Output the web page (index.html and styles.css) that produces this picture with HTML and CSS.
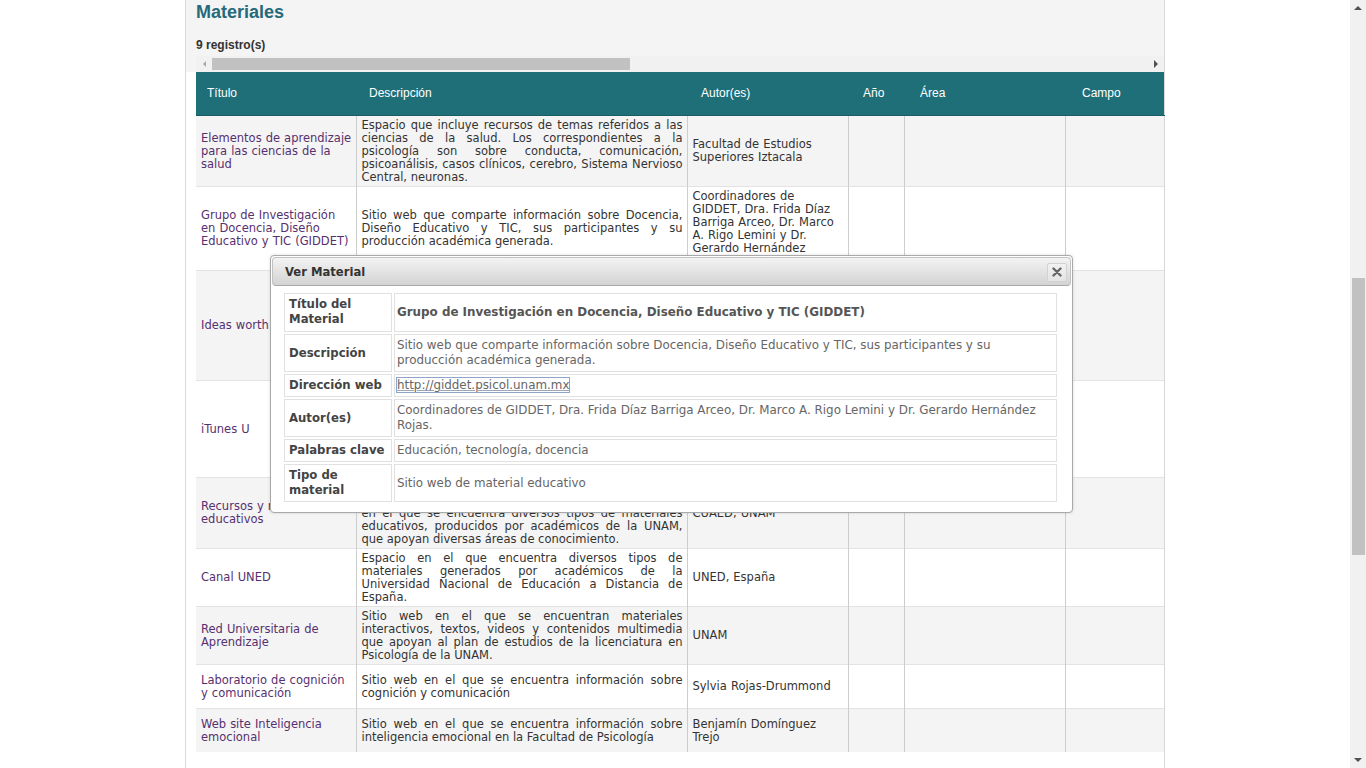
FILE: index.html
```html
<!DOCTYPE html>
<html lang="es">
<head>
<meta charset="utf-8">
<title>Materiales</title>
<link rel="stylesheet" href="styles.css">
</head>
<body>
<div class="viewport">
  <div class="page">
    <div class="page-head">
      <h2 class="page-title">Materiales</h2>
      <div class="count">9 registro(s)</div>
      <div class="hscroll">
        <span class="hs-btn"><i class="tri tri-left"></i></span>
        <span class="hs-thumb"></span>
        <span class="hs-fill"></span>
        <span class="hs-btn"><i class="tri tri-right"></i></span>
      </div>
    </div>
    <div class="table-wrap">
      <table class="grid">
        <colgroup>
          <col class="c-title"><col class="c-desc"><col class="c-auth"><col class="c-year"><col class="c-area"><col class="c-field">
        </colgroup>
        <thead>
          <tr class="head-row">
            <th>Título</th><th>Descripción</th><th>Autor(es)</th><th>Año</th><th>Área</th><th>Campo</th>
          </tr>
        </thead>
        <tbody>
          <tr>
            <td><a href="#">Elementos de aprendizaje para las ciencias de la salud</a></td>
            <td class="desc">Espacio que incluye recursos de temas referidos a las ciencias de la salud. Los correspondientes a la psicología son sobre conducta, comunicación, psicoanálisis, casos clínicos, cerebro, Sistema Nervioso Central, neuronas.</td>
            <td class="auth">Facultad de Estudios Superiores Iztacala</td><td></td><td></td><td></td>
          </tr>
          <tr>
            <td><a href="#">Grupo de Investigación en Docencia, Diseño Educativo y TIC (GIDDET)</a></td>
            <td class="desc">Sitio web que comparte información sobre Docencia, Diseño Educativo y TIC, sus participantes y su producción académica generada.</td>
            <td class="auth">Coordinadores de GIDDET, Dra. Frida Díaz Barriga Arceo, Dr. Marco A. Rigo Lemini y Dr. Gerardo Hernández Rojas.</td><td></td><td></td><td></td>
          </tr>
          <tr class="row-ted">
            <td><a href="#">Ideas worth spreading</a></td>
            <td class="desc">Sitio web con conferencias de expertos de todo el mundo sobre ciencia, tecnología, educación, diseño y psicología, con subtítulos en español.</td>
            <td class="auth">TED</td><td></td><td></td><td></td>
          </tr>
          <tr class="row-itunes">
            <td><a href="#">iTunes U</a></td>
            <td class="desc">Espacio en el que universidades de todo el mundo comparten cursos, conferencias y materiales educativos.</td>
            <td class="auth">Apple</td><td></td><td></td><td></td>
          </tr>
          <tr>
            <td><a href="#">Recursos y materiales educativos</a></td>
            <td class="desc">Portal de la Coordinación de Universidad Abierta y Educación a Distancia. Espacio<br>en el que se encuentra diversos tipos de materiales educativos, producidos por académicos de la UNAM, que apoyan diversas áreas de conocimiento.</td>
            <td class="auth">CUAED, UNAM</td><td></td><td></td><td></td>
          </tr>
          <tr>
            <td><a href="#">Canal UNED</a></td>
            <td class="desc">Espacio en el que encuentra diversos tipos de materiales generados por académicos de la Universidad Nacional de Educación a Distancia de España.</td>
            <td class="auth">UNED, España</td><td></td><td></td><td></td>
          </tr>
          <tr>
            <td><a href="#">Red Universitaria de Aprendizaje</a></td>
            <td class="desc">Sitio web en el que se encuentran materiales interactivos, textos, videos y contenidos multimedia que apoyan al plan de estudios de la licenciatura en Psicología de la UNAM.</td>
            <td class="auth">UNAM</td><td></td><td></td><td></td>
          </tr>
          <tr>
            <td><a href="#">Laboratorio de cognición y comunicación</a></td>
            <td class="desc">Sitio web en el que se encuentra información sobre cognición y comunicación</td>
            <td class="auth">Sylvia Rojas-Drummond</td><td></td><td></td><td></td>
          </tr>
          <tr>
            <td><a href="#">Web site Inteligencia emocional</a></td>
            <td class="desc">Sitio web en el que se encuentra información sobre inteligencia emocional en la Facultad de Psicología</td>
            <td class="auth">Benjamín Domínguez Trejo</td><td></td><td></td><td></td>
          </tr>
        </tbody>
      </table>
    </div>
  </div>

  <div class="dialog">
    <div class="dialog-bar">
      <span class="dialog-title">Ver Material</span>
      <span class="dialog-close">
        <svg width="10" height="10" viewBox="0 0 10 10"><path d="M1.5 1.5L8.5 8.5M8.5 1.5L1.5 8.5" stroke="#666" stroke-width="2.4" stroke-linecap="round"/></svg>
      </span>
    </div>
    <div class="dialog-body">
      <table class="detail">
        <tr class="first">
          <th>Título del Material</th>
          <td class="strong">Grupo de Investigación en Docencia, Diseño Educativo y TIC (GIDDET)</td>
        </tr>
        <tr>
          <th>Descripción</th>
          <td>Sitio web que comparte información sobre Docencia, Diseño Educativo y TIC, sus participantes y su producción académica generada.</td>
        </tr>
        <tr>
          <th>Dirección web</th>
          <td><a class="url" href="#">http://giddet.psicol.unam.mx</a></td>
        </tr>
        <tr>
          <th>Autor(es)</th>
          <td>Coordinadores de GIDDET, Dra. Frida Díaz Barriga Arceo, Dr. Marco A. Rigo Lemini y Dr. Gerardo Hernández Rojas.</td>
        </tr>
        <tr>
          <th>Palabras clave</th>
          <td>Educación, tecnología, docencia</td>
        </tr>
        <tr>
          <th>Tipo de material</th>
          <td>Sitio web de material educativo</td>
        </tr>
      </table>
    </div>
  </div>
</div>
<div class="vscroll">
  <span class="vs-btn"><i class="tri tri-up"></i></span>
  <span class="vs-thumb"></span>
  <span class="vs-fill"></span>
  <span class="vs-btn"><i class="tri tri-down"></i></span>
</div>
</body>
</html>
```

FILE: styles.css
```css
html, body {
  margin: 0;
  height: 100%;
  overflow: hidden;
  background: #fff;
}
body {
  display: flex;
  font-family: "DejaVu Sans", Verdana, sans-serif;
}
.viewport {
  flex: 1;
  position: relative;
  overflow: hidden;
}
.page {
  width: 980px;
  margin: 0 auto;
  min-height: 100%;
  box-sizing: border-box;
  border-left: 1px solid #dadada;
  border-right: 1px solid #dadada;
  background: #fff;
}
.page-head {
  background: #f4f4f4;
  padding-left: 10px;
}
.page-title {
  margin: 0;
  font: bold 18px/24px "Liberation Sans", Arial, sans-serif;
  color: #25697a;
}
.count {
  margin-top: 13px;
  font: bold 12px/16px "Liberation Sans", Arial, sans-serif;
  color: #333;
}
.hscroll {
  margin-top: 3px;
  height: 16px;
  background: #f1f1f1;
  display: flex;
  align-items: center;
}
.hs-btn, .vs-btn {
  width: 16px;
  height: 16px;
  display: flex;
  align-items: center;
  justify-content: center;
  flex: none;
}
.hs-thumb {
  width: 418px;
  height: 12px;
  background: #c1c1c1;
}
.hs-fill, .vs-fill { flex: 1; }
.tri {
  width: 0;
  height: 0;
  display: block;
}
.tri-left {
  border-top: 3px solid transparent;
  border-bottom: 3px solid transparent;
  border-right: 3px solid #a8a8a8;
}
.tri-right {
  border-top: 4px solid transparent;
  border-bottom: 4px solid transparent;
  border-left: 4px solid #505050;
}
.tri-up {
  border-left: 4px solid transparent;
  border-right: 4px solid transparent;
  border-bottom: 4px solid #505050;
}
.tri-down {
  border-left: 4px solid transparent;
  border-right: 4px solid transparent;
  border-top: 4px solid #505050;
}
.table-wrap {
  padding-left: 10px;
}
.grid {
  width: 968px;
  table-layout: fixed;
  border-collapse: collapse;
  font-size: 11.5px;
  line-height: 13px;
  word-spacing: 0.4px;
  color: #333;
}
.c-title { width: 160px; }
.c-desc { width: 331px; }
.c-auth { width: 161px; }
.c-year { width: 56px; }
.c-area { width: 161px; }
.c-field { width: 99px; }
.head-row {
  height: 43px;
  background: #1f6f79;
}
.head-row th {
  font: 12px "Liberation Sans", Arial, sans-serif;
  word-spacing: 0;
  color: #fff;
  text-align: left;
  font-weight: normal;
  padding: 0 0 0 11px;
  border-bottom: 1px solid #1a5c64;
}
.head-row th:nth-child(2) { padding-left: 13px; }
.head-row th:nth-child(3) { padding-left: 14px; }
.head-row th:nth-child(4) { padding-left: 15px; }
.head-row th:nth-child(5) { padding-left: 16px; }
.head-row th:nth-child(6) { padding-left: 17px; }
.grid tbody tr { height: 44px; }
.grid tbody tr:nth-child(odd) { background: #f4f4f4; }
.grid tbody tr.row-ted { height: 110px; }
.grid tbody tr.row-itunes { height: 97px; }
.grid td {
  padding: 3px 4px 2px 5px;
  vertical-align: middle;
  border-top: 1px solid #e3e3e3;
  border-left: 1px solid #cdcdcd;
  word-wrap: break-word;
}
.grid td:first-child { border-left: none; }
.grid td:last-child { border-right: 1px solid #d6d6d6; }
.grid td.desc { text-align: justify; word-spacing: 0; }
.grid td.auth { padding-right: 6px; }
.grid a {
  color: #57306f;
  text-decoration: none;
}

.dialog {
  position: absolute;
  left: 270px;
  top: 255px;
  width: 803px;
  box-sizing: border-box;
  padding: 1px 1px 3px 1px;
  background: #fff;
  border: 1px solid #a9a9a9;
  border-radius: 4px;
  box-shadow: 0 0 3px rgba(0, 0, 0, 0.15);
}
.dialog-bar {
  height: 29px;
  box-sizing: border-box;
  border: 1px solid #c2c2c2;
  border-bottom-color: #a8a8a8;
  border-radius: 4px;
  background: linear-gradient(#f3f3f3, #d3d3d3);
  display: flex;
  align-items: center;
  justify-content: space-between;
  padding: 0 3px 0 12px;
}
.dialog-title {
  font: bold 11.6px "DejaVu Sans", Verdana, sans-serif;
  color: #333;
}
.dialog-close {
  width: 20px;
  height: 19px;
  box-sizing: border-box;
  border: 1px solid #d2d2d2;
  border-radius: 2px;
  background: linear-gradient(#f2f2f2, #e4e4e4);
  display: flex;
  align-items: center;
  justify-content: center;
  margin-top: 1px;
}
.dialog-body {
  padding: 5px 12px 5px 10px;
}
.detail {
  width: 777px;
  border-collapse: separate;
  border-spacing: 2px;
  font-size: 11.9px;
  line-height: 15px;
}
.detail th {
  width: 99px;
  text-align: left;
  vertical-align: middle;
  padding: 3px 3px 3px 4px;
  border: 1px solid #e1e1e1;
  color: #444;
  font-size: 11.7px;
  font-weight: bold;
}
.detail tr.first th { padding-bottom: 4px; }
.detail td {
  padding: 3px 3px 3px 2px;
  border: 1px solid #e1e1e1;
  color: #666;
  vertical-align: middle;
}
.detail td.strong {
  font-weight: bold;
  color: #555;
}
.detail .url {
  color: #666;
  text-decoration: underline;
  text-decoration-color: #9aa8bd;
  outline: 1px solid #8ea5c8;
  outline-offset: 0;
}

.vscroll {
  width: 16px;
  flex: none;
  background: #f1f1f1;
  display: flex;
  flex-direction: column;
  align-items: center;
}
.vs-thumb {
  width: 13px;
  height: 277px;
  margin-top: 262px;
  background: #c1c1c1;
}
```
